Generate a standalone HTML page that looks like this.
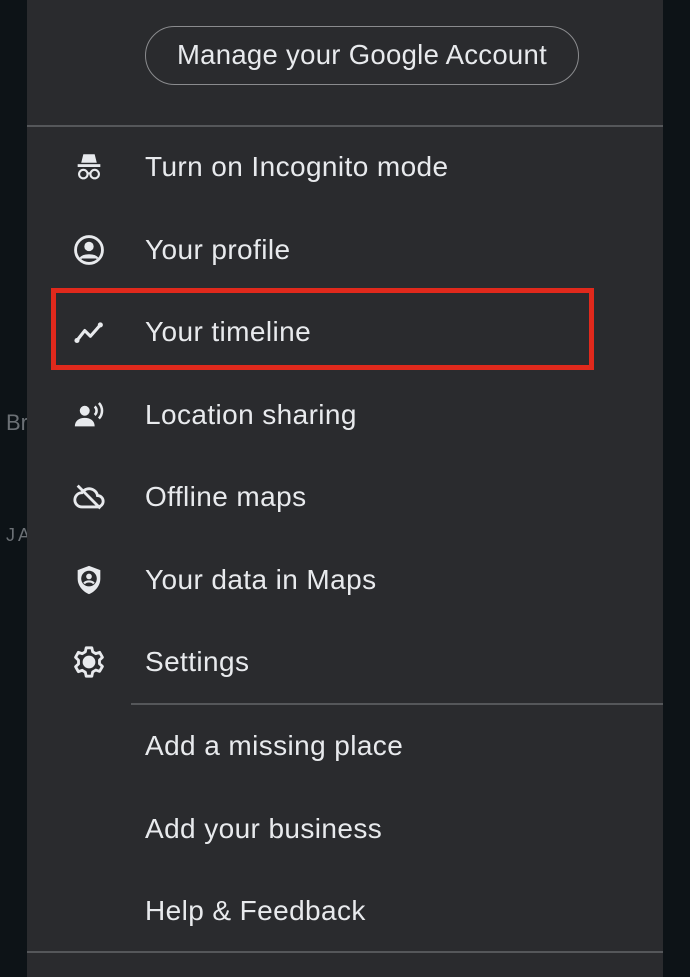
<!DOCTYPE html>
<html><head><style>
*{margin:0;padding:0;box-sizing:border-box}
body{width:690px;height:977px;background:#0d1317;position:relative;overflow:hidden;font-family:"Liberation Sans",Arial,sans-serif;color:#e8eaed}
.panel{position:absolute;left:27px;top:0;width:636px;height:977px;background:#2a2b2e}
.btn{position:absolute;left:145px;top:26px;width:434px;height:59px;border:1.5px solid #8a8b8e;border-radius:30px;font-size:27.5px;letter-spacing:0.3px;text-align:center;line-height:56px;color:#e8eaed}
.div{position:absolute;height:2px;background:#55575a}
.item{position:absolute;left:145px;font-size:28px;letter-spacing:0.4px;line-height:30px;height:30px;transform:translateY(-15px);white-space:nowrap}
.ic{position:absolute;left:72px;width:34px;height:34px;transform:translateY(-17px)}
.red{position:absolute;left:51px;top:288px;width:543px;height:82px;border:5px solid #e0291c}
.side{position:absolute;color:#6b7075;font-size:22px}
</style></head><body>
<div class="side" style="left:6px;top:410px">Br</div>
<div class="side" style="left:6px;top:525px;font-size:18px;letter-spacing:3px">JA</div>
<div class="panel"></div>
<div class="btn">Manage your Google Account</div>
<div class="div" style="left:27px;top:125px;width:636px"></div>
<div class="div" style="left:131px;top:703px;width:532px"></div>
<div class="div" style="left:27px;top:951px;width:636px"></div>

<svg class="ic" style="top:167px" viewBox="0 0 24 24" fill="#e8eaed"><path d="M8 3h8l1.5 6h-11z"/><rect x="4" y="10" width="16" height="2"/><circle cx="8" cy="17" r="3" fill="none" stroke="#e8eaed" stroke-width="1.5"/><circle cx="16" cy="17" r="3" fill="none" stroke="#e8eaed" stroke-width="1.5"/><path d="M11 16.5h2" stroke="#e8eaed" stroke-width="1.5"/></svg>
<div class="item" style="top:167px">Turn on Incognito mode</div>

<svg class="ic" style="top:250px" viewBox="0 0 24 24"><circle cx="12" cy="12" r="9.5" fill="none" stroke="#e8eaed" stroke-width="2"/><circle cx="12" cy="9.5" r="3.3" fill="#e8eaed"/><path d="M6 18c2-3 10-3 12 0" fill="#e8eaed" stroke="#e8eaed" stroke-width="1.5"/></svg>
<div class="item" style="top:250px">Your profile</div>

<svg class="ic" style="top:332px" viewBox="0 0 24 24"><path d="M3.5 18l5.5-7 4 4 7-8" fill="none" stroke="#e8eaed" stroke-width="2.2" stroke-linecap="round" stroke-linejoin="round"/><circle cx="3.5" cy="18" r="1.8" fill="#e8eaed"/><circle cx="20" cy="7" r="1.8" fill="#e8eaed"/></svg>
<div class="item" style="top:332px">Your timeline</div>
<div class="red"></div>

<svg class="ic" style="top:415px" viewBox="0 0 24 24" fill="#e8eaed"><circle cx="9" cy="9" r="3.5"/><path d="M2 20c0-4 3-6 7-6s7 2 7 6z"/><path d="M16 6a4 4 0 010 6M19 3.5a8 8 0 010 11" fill="none" stroke="#e8eaed" stroke-width="1.8"/></svg>
<div class="item" style="top:415px">Location sharing</div>

<svg class="ic" style="top:497px" viewBox="0 0 24 24" fill="none" stroke="#e8eaed" stroke-width="2"><path d="M7 19h11a4 4 0 000-8 6 6 0 00-11-2 5 5 0 000 10z"/><path d="M4 4l16 16"/></svg>
<div class="item" style="top:497px">Offline maps</div>

<svg class="ic" style="top:580px" viewBox="0 0 24 24"><path d="M12 2l8 3v6c0 5-3.5 9-8 11-4.5-2-8-6-8-11V5z" fill="#e8eaed"/><circle cx="12" cy="11" r="5.5" fill="#2a2b2e"/><circle cx="12" cy="9.5" r="2" fill="#e8eaed"/><path d="M8.5 14.5c1.5-2 5.5-2 7 0" stroke="#e8eaed" stroke-width="1.5" fill="none"/></svg>
<div class="item" style="top:580px">Your data in Maps</div>

<svg class="ic" style="top:662px" viewBox="0 0 24 24" fill="none" stroke="#e8eaed" stroke-width="2"><path d="M10 2h4l.6 2.8 2.2 1.3 2.7-.9 2 3.5-2.1 1.9v2.6l2.1 1.9-2 3.5-2.7-.9-2.2 1.3L14 22h-4l-.6-2.8-2.2-1.3-2.7.9-2-3.5 2.1-1.9v-2.6L2.5 8.7l2-3.5 2.7.9 2.2-1.3z" stroke-linejoin="round"/><circle cx="12" cy="12" r="3.5" fill="#e8eaed"/></svg>
<div class="item" style="top:662px">Settings</div>

<div class="item" style="top:746px">Add a missing place</div>
<div class="item" style="top:829px">Add your business</div>
<div class="item" style="top:911px">Help &amp; Feedback</div>
</body></html>
